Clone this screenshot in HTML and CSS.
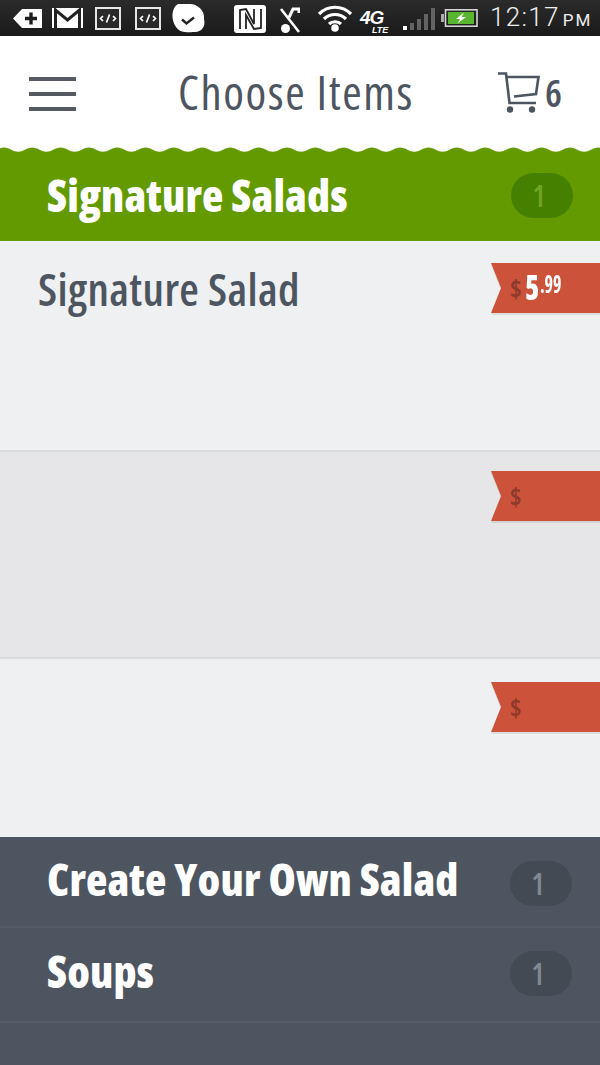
FILE: index.html
```html
<!DOCTYPE html>
<html lang="en">
<head>
<meta charset="utf-8">
<title>Choose Items</title>
<link rel="stylesheet" href="styles.css">
</head>
<body>
<div class="app">
  <div class="status">
    <svg class="status-left" width="300" height="36" viewBox="0 0 300 36">
      <path d="M13 18.500L22 9H42V28H22Z" fill="#fff"/>
      <path d="M25 18.500H37M31 12.500V24.500" stroke="#1d1d1d" stroke-width="3.400" fill="none"/>
      <rect x="52" y="8" width="31" height="20" fill="#fff"/>
      <path d="M55.500 28V10L67.500 20L79.500 10V28" fill="none" stroke="#222" stroke-width="3"/>
      <rect x="96" y="8" width="24" height="21" fill="#2a2a2a" stroke="#e6e6e6" stroke-width="2"/>
      <rect x="136" y="8" width="24" height="21" fill="#2a2a2a" stroke="#e6e6e6" stroke-width="2"/>
      <path d="M103 16L100.500 18.500L103 21M113 16L115.500 18.500L113 21M109.500 14.500L106.500 22.500" stroke="#fff" stroke-width="1.700" fill="none"/>
      <path d="M143 16L140.500 18.500L143 21M153 16L155.500 18.500L153 21M149.500 14.500L146.500 22.500" stroke="#fff" stroke-width="1.700" fill="none"/>
      <path d="M178 4H190C198 4 205 11 204 19C206 27 201 33 193 32C187 33 179 32 176 27C171 20 171 8 178 4Z" fill="#fff"/>
      <path d="M182 19.500L186.500 23.500L194 17.500" fill="none" stroke="#222" stroke-width="2.400"/>
      <rect x="234" y="5" width="32" height="28" rx="3" fill="#fff"/>
      <path d="M240 29V10L246 9L254 24V9M246 29V15L254 29L261 28V9" fill="none" stroke="#222" stroke-width="1.800"/>
      <path d="M281 9L299 32" stroke="#fff" stroke-width="2.600"/>
      <circle cx="285.500" cy="28.500" r="4.500" fill="#fff"/>
      <path d="M289 17.500L293 9H299V13" fill="none" stroke="#fff" stroke-width="3"/>
    </svg>
    <svg class="status-wifi" width="36" height="28" viewBox="0 0 36 28">
      <path d="M2 9C11 0 25 0 34 9M7 14C13 8 23 8 29 14M12 19C15 16 21 16 24 19" fill="none" stroke="#fff" stroke-width="3.200"/>
      <circle cx="18" cy="23" r="3.800" fill="#fff"/>
    </svg>
    <span class="net"><b class="net-4g">4G</b><b class="net-lte">LTE</b></span>
    <span class="bars">
      <i class="bar bar-1"></i><i class="bar bar-2"></i><i class="bar bar-3"></i><i class="bar bar-4"></i><i class="bar bar-5"></i>
    </span>
    <svg class="battery" width="37" height="18" viewBox="0 0 37 18">
      <rect x="0" y="5" width="3" height="8" fill="#aaa"/>
      <rect x="4.500" y=".800" width="31.500" height="16.400" fill="none" stroke="#d5d5d5" stroke-width="1.600"/>
      <rect x="7" y="3" width="26" height="12" fill="#57b52e"/>
      <path d="M23 3.500L15 10H19L16.500 14.500L25 8H20.500Z" fill="#fff"/>
    </svg>
    <span class="clock">12:17<small class="ampm">PM</small></span>
  </div>

  <header class="header">
    <div class="burger"><i></i><i></i><i></i></div>
    <h1 class="title">Choose Items</h1>
    <div class="cart">
      <svg width="42" height="42" viewBox="0 0 42 42">
        <path d="M0 1.500H8L11.500 31H38" fill="none" stroke="#4d5560" stroke-width="2.600"/>
        <path d="M9 5H40.500L38 22L16 24.500" fill="none" stroke="#4d5560" stroke-width="2.600"/>
        <circle cx="12" cy="37.500" r="3.200" fill="#4d5560"/>
        <circle cx="34" cy="37.500" r="3.200" fill="#4d5560"/>
      </svg>
      <span class="cart-count">6</span>
    </div>
  </header>

  <section class="cat cat-green">
    <svg class="wave" width="600" height="6" viewBox="0 0 600 6">
      <defs>
        <pattern id="w" width="28.300" height="6" patternUnits="userSpaceOnUse" x="4">
          <path d="M0 0H28.300V.500C23 .500 19 4.800 14.150 4.800C9.300 4.800 5.300 .500 0 .500Z" fill="#fff"/>
        </pattern>
      </defs>
      <rect width="600" height="6" fill="url(#w)"/>
    </svg>
    <h2 class="cat-name">Signature Salads</h2>
    <span class="pill pill-green">1</span>
  </section>

  <main class="items">
    <article class="item item-a">
      <h3 class="item-name">Signature Salad</h3>
      <div class="ribbon-wrap"><div class="ribbon"><span class="cur">$</span><span class="dollars">5</span><span class="cents">.99</span></div></div>
    </article>
    <article class="item item-b">
      <div class="ribbon-wrap"><div class="ribbon"><span class="cur">$</span></div></div>
    </article>
    <article class="item item-c">
      <div class="ribbon-wrap"><div class="ribbon"><span class="cur">$</span></div></div>
    </article>
  </main>

  <section class="cat cat-dark cat-first">
    <h2 class="cat-name">Create Your Own Salad</h2>
    <span class="pill pill-dark pill-first">1</span>
  </section>
  <section class="cat cat-dark cat-second">
    <h2 class="cat-name">Soups</h2>
    <span class="pill pill-dark pill-second">1</span>
  </section>
  <div class="cat-rest"></div>
</div>
</body>
</html>
```

FILE: styles.css
```css
* { box-sizing: border-box; }
html, body { margin: 0; padding: 0; }
body { width: 600px; height: 1065px; overflow: hidden; background: #fff; font-family: "Open Sans", sans-serif; }
h1, h2, h3 { margin: 0; font-weight: inherit; }
.app { width: 600px; height: 1065px; display: flex; flex-direction: column; overflow: hidden; }

.status { height: 36px; flex: none; display: flex; align-items: center; background: linear-gradient(#2b2b2b, #1a1a1a); color: #eee; overflow: hidden; }
.status-left { flex: none; }
.status-wifi { flex: none; margin-left: 17px; margin-top: 2px; }
.net { position: relative; width: 34px; height: 36px; margin-left: 7px; flex: none; color: #fff; font-family: "Liberation Sans", sans-serif; font-style: italic; }
.net-4g { position: absolute; left: 0; top: 10px; font-size: 19px; line-height: 15px; letter-spacing: -1px; }
.net-lte { position: absolute; left: 12px; top: 26px; font-size: 9px; line-height: 8px; }
.bars { display: flex; align-items: flex-end; gap: 3px; height: 22px; margin-left: 9px; margin-top: 2px; flex: none; }
.bar { display: block; width: 4px; background: #636363; }
.bar-1 { height: 4px; background: #fff; }
.bar-2 { height: 7px; }
.bar-3 { height: 11px; }
.bar-4 { height: 16px; }
.bar-5 { height: 22px; }
.battery { flex: none; margin-left: 6px; margin-top: 0; }
.clock { flex: none; margin-left: 12px; font-family: "Roboto", sans-serif; font-size: 26px; font-weight: 300; line-height: 36px; white-space: nowrap; letter-spacing: 1.300px; }
.ampm { font-size: 17px; font-weight: 400; margin-left: 3px; letter-spacing: 2px; }

.header { height: 111px; flex: none; display: flex; align-items: center; padding: 0 38px 0 29px; background: #fff; color: #4d5560; }
.burger { width: 47px; display: flex; flex-direction: column; gap: 11px; margin-top: 5px; flex: none; }
.burger i { display: block; height: 4px; background: #555a63; }
.title { flex: 1; text-align: center; font-stretch: 75%; font-size: 47px; line-height: 56px; font-weight: 400; letter-spacing: 1.6px; padding-left: 18px; margin-top: 0; white-space: nowrap; }
.cart { display: flex; align-items: center; gap: 5px; flex: none; margin-top: 2px; }
.cart-count { font-size: 38px; line-height: 40px; font-weight: 600; font-stretch: 75%; margin-bottom: 2px; }

.cat { position: relative; flex: none; display: flex; align-items: center; justify-content: space-between; padding: 0 27px 0 47px; color: #fff; }
.cat-name { font-stretch: 75%; font-weight: 800; font-size: 44px; line-height: 54px; letter-spacing: .15px; white-space: nowrap; }
.cat-green { height: 94px; background: #639a00; padding-top: 2px; }
.wave { position: absolute; left: 0; top: 0; }
.cat-dark { background: #4d5560; border-bottom: 2px solid #555c67; padding-right: 28px; }
.cat-first { height: 91px; padding-bottom: 6px; }
.cat-second { height: 95px; padding-bottom: 8px; }
.cat-rest { flex: 1; background: #4d5560; }

.pill { width: 62px; height: 45px; border-radius: 23px; display: flex; align-items: center; justify-content: center; padding-right: 6px; font-size: 30px; font-weight: 600; font-stretch: 75%; }
.pill-green { background: #468000; color: #6da51e; }
.pill-dark { background: #434a54; color: #818891; }
.pill-first { margin-top: 10px; }
.pill-second { margin-top: 6px; }

.items { flex: none; display: flex; flex-direction: column; }
.item { display: flex; justify-content: space-between; align-items: flex-start; border-bottom: 2px solid #d9dade; background: #eef0f2; }
.item-a { height: 211px; padding-top: 22px; }
.item-b { height: 207px; padding-top: 19px; background: #e6e6e9; }
.item-c { height: 178px; padding-top: 23px; border-bottom: 0; }
.item-name { font-stretch: 75%; font-size: 45px; line-height: 52px; font-weight: 600; letter-spacing: .4px; color: #4d5560; padding-left: 38px; white-space: nowrap; }
.ribbon-wrap { margin-left: auto; flex: none; filter: drop-shadow(0 2px 0 rgba(0,0,0,.08)); }
.ribbon { width: 109px; height: 50px; background: #cc523a; clip-path: polygon(0 0, 100% 0, 100% 100%, 0 100%, 10px 50%); display: flex; align-items: flex-start; padding-left: 19px; color: #fff; font-stretch: 75%; }
.cur { color: #8f3a2c; font-size: 25px; font-weight: 700; line-height: 50px; }
.dollars { display: inline-block; font-size: 36px; line-height: 48px; font-weight: 800; margin-left: 3px; transform: scaleX(.8); transform-origin: left center; }
.cents { display: inline-block; font-size: 25px; line-height: 40px; font-weight: 700; margin-left: -3px; transform: scaleX(.72); transform-origin: left center; }
```
